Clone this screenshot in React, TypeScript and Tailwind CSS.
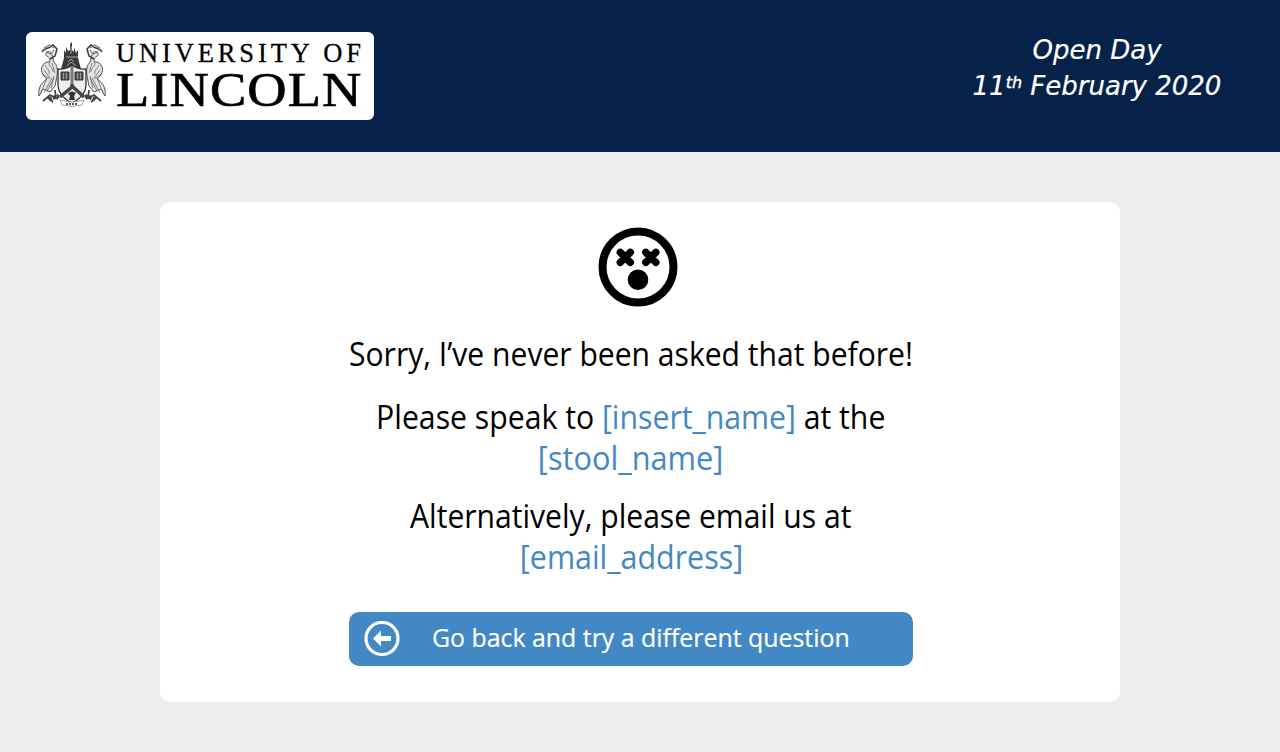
import React from 'react';

function Swan() {
  return (
    <g>
      <path d="M11 38C4 33 4 25 9 22c3-2 5 0 5-4-1-3-5-2-4-6 2-3 6-1 6 2l2 7c3 3 4 8 3 14l-2 10-5 6-7-3-4 7c-1-6 1-13 8-17z" fill="#e4e4e4" stroke="#555" strokeWidth="1" />
      <path d="M5 52l6-15m-3 15l8-15m-5 13l7-13M9 24c1 4 5 4 4 9m1-13c-3 5 3 6 3 11M8 29l6 8m-8-4l8 5M16 22l3 10m-1 3l-3 12" fill="none" stroke="#666" strokeWidth=".8" />
      <path d="M6 11C8 6 12 9 17 4l4 4-2 7-5 3" fill="none" stroke="#444" strokeWidth="1.6" />
      <path d="M8 7l6-3 4 3m-8 4l5 2 3-4" fill="none" stroke="#777" strokeWidth="1.2" />
      <path d="M7 60l7-6 8 4m-3-9l1 9m-9-2l6 5" fill="none" stroke="#444" strokeWidth="1.8" />
    </g>
  );
}

function Logo() {
  return (
    <svg width="348" height="88" viewBox="26 32 348 88" role="img" aria-label="University of Lincoln">
      <g transform="translate(36 41)">
        <Swan />
        <g transform="translate(72 0) scale(-1 1)"><Swan /></g>
        <path d="M28 17V9l2 3V6l2 4 2-1V3l2-2v8l2 2V6l2 6 2-3v8l3 11H25z" fill="#3a3a3a" />
        <path d="M35 5v8m-5 3h12m-10 5l3-3 3 3m-7 4l4-4 5 4" fill="none" stroke="#aaa" strokeWidth="1" />
        <path d="M22 28q7 1 14-4 7 5 14 4v15q0 12-14 19-14-7-14-19z" fill="#eee" stroke="#333" strokeWidth="1.3" />
        <path d="M25 31h8v8h-8zm14 0h8v8h-8z" fill="#555" stroke="#333" />
        <path d="M27.500 32v6m3-6v6m11-6v6m3-6v6" stroke="#999" />
        <path d="M36 43v3L24 56m12-11l12 11" fill="none" stroke="#444" strokeWidth="3.5" />
        <path d="M36 25v18" stroke="#777" strokeWidth="3" />
        <path d="M32 52q4-3 8 0l-2 3 1 4h-6l1-4z" fill="#333" />
        <path d="M24 59q12 4 24 0l-2 5q-10 3-20 0z" fill="#fff" stroke="#888" strokeWidth=".8" />
        <path d="M30 63h12" stroke="#555" strokeWidth="2" strokeDasharray="2 1" />
        <path d="M13 58l10-3m26 0l10 3" stroke="#444" strokeWidth="4" strokeDasharray="3 1" />
      </g>
      <g fontFamily='"Liberation Serif", serif' fill="#000" stroke="#000">
        <text x="116" y="62" fontSize="26.5" strokeWidth=".3" textLength="245">UNIVERSITY OF</text>
        <text transform="translate(116 106) scale(1.1 1)" fontSize="49.5" strokeWidth=".7" textLength="223">LINCOLN</text>
      </g>
    </svg>
  );
}

function DizzyFace() {
  return (
    <svg width="80" height="80" viewBox="0 0 80 80">
      <circle cx="40" cy="40" r="35.5" fill="none" stroke="#000" strokeWidth="8" />
      <path d="M22.300 25.300l10 10m0-10l-10 10M47.800 25.300l10 10m0-10l-10 10" stroke="#000" strokeWidth="7.4" strokeLinecap="round" />
      <circle cx="40" cy="52.7" r="10.3" />
    </svg>
  );
}

function BackIcon() {
  return (
    <svg width="36" height="36" viewBox="0 0 36 36">
      <circle cx="18" cy="17.5" r="16" fill="none" stroke="#fff" strokeWidth="3.2" />
      <path d="M9 17.500l8-8v5.600H27v4.800H17v5.600z" fill="#fff" />
    </svg>
  );
}

export default function App() {
  return (
    <div className="flex h-[752px] w-[1280px] flex-col overflow-hidden bg-[#eeeeee]">
      <header className="flex h-[152px] shrink-0 justify-between bg-[#062248] pt-8 pl-[26px]">
        <div className="h-[88px] w-[348px] rounded-md bg-white"><Logo /></div>
        <div className="mr-[57px] w-[252px] text-center font-['DejaVu_Sans',sans-serif] text-[26px] leading-9 whitespace-nowrap text-white italic [-webkit-text-stroke:0.2px_white]">
          <p>Open Day</p>
          <p>11<sup className="top-[-0.42em] text-[16px] [-webkit-text-stroke:0.4px_white]">th</sup> February 2020</p>
        </div>
      </header>
      <main className="mx-auto mt-[50px] h-[500px] w-[960px] rounded-[10px] bg-white pt-[25px] pr-[18px] font-['Open_Sans',sans-serif] text-[32px] leading-[41px] text-black">
        <div className="flex justify-center pl-[14px]"><DizzyFace /></div>
        <div className="flex flex-col items-center whitespace-nowrap">
          <p className="mt-[26px] origin-center scale-x-[0.94]">Sorry, I’ve never been asked that before!</p>
          <p className="mt-[22px] origin-center scale-x-[0.944]">Please speak to <span className="text-[#4288c5]">[insert_name]</span> at the</p>
          <p className="origin-center scale-x-[0.96] text-[#4288c5]">[stool_name]</p>
          <p className="mt-[17px] origin-center scale-x-[0.94]">Alternatively, please email us at</p>
          <p className="origin-center scale-x-[0.95] text-[#4288c5]">[email_address]</p>
          <button className="mt-[35px] flex h-[54px] w-[564px] items-center rounded-[10px] bg-[#4288c5] pl-[15px] text-[26px] text-white">
            <BackIcon />
            <span className="ml-8 -mt-1 origin-left scale-x-[0.957] [-webkit-text-stroke:0.2px_white]">Go back and try a different question</span>
          </button>
        </div>
      </main>
    </div>
  );
}
